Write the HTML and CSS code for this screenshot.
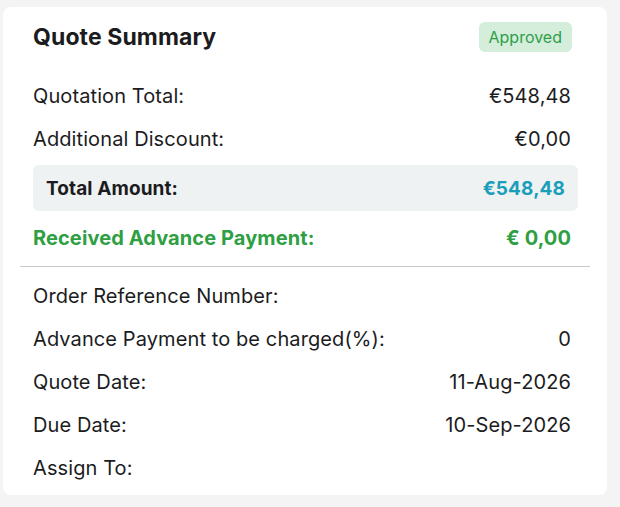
FILE: index.html
```html
<!DOCTYPE html>
<html lang="en">
<head>
    <meta charset="UTF-8">
    <meta name="viewport" content="width=device-width, initial-scale=1.0">
    <title>Quote Summary</title>
    <link rel="stylesheet" href="styles.css">
</head>
<body>
    <div class="card">
        <div class="card-header">
            <h2>Quote Summary</h2>
            <span class="badge">Approved</span>
        </div>

        <div class="row">
            <span>Quotation Total:</span>
            <span>€548,48</span>
        </div>
        <div class="row">
            <span>Additional Discount:</span>
            <span>€0,00</span>
        </div>
        <div class="row total">
            <span>Total Amount:</span>
            <span class="total-value">€548,48</span>
        </div>
        <div class="row received">
            <span>Received Advance Payment:</span>
            <span>€ 0,00</span>
        </div>

        <hr class="divider">

        <div class="row">
            <span>Order Reference Number:</span>
            <span></span>
        </div>
        <div class="row">
            <span>Advance Payment to be charged(%):</span>
            <span>0</span>
        </div>
        <div class="row">
            <span>Quote Date:</span>
            <span>11-Aug-2026</span>
        </div>
        <div class="row">
            <span>Due Date:</span>
            <span>10-Sep-2026</span>
        </div>
        <div class="row">
            <span>Assign To:</span>
            <span></span>
        </div>
    </div>
</body>
</html>
```

FILE: styles.css
```css
* {
    margin: 0;
    padding: 0;
    box-sizing: border-box;
}

body {
    background: #f4f4f5;
    font-family: Inter, "Liberation Sans", sans-serif;
    color: #1c1c1e;
    padding: 7px 13px 0 3px;
}

.card {
    background: #fff;
    border-radius: 8px;
    padding: 14px 29px 10px 30px;
    width: 604px;
    height: 488px;
}

.card-header {
    display: flex;
    justify-content: space-between;
    align-items: center;
    padding-right: 6px;
    height: 32px;
    margin-bottom: 21px;
}

.card-header h2 {
    font-size: 23px;
    font-weight: 700;
    letter-spacing: 0.1px;
}

.badge {
    background: #d4eedb;
    color: #2f9e4a;
    font-size: 16px;
    padding: 5px 10px;
    border-radius: 6px;
    height: 30px;
    line-height: 20px;
}

.row {
    display: flex;
    justify-content: space-between;
    align-items: center;
    height: 43px;
    font-size: 20px;
    letter-spacing: 0.1px;
    padding-right: 7px;
}

.row.total {
    background: #eef2f3;
    border-radius: 6px;
    height: 46px;
    padding: 0 13px;
    margin: 5px 0 7px;
    font-weight: 700;
    font-size: 19px;
}

.total-value {
    color: #1a9fbb;
}

.row.received {
    color: #2ea043;
    font-weight: 700;
    height: 40px;
}

.divider {
    border: none;
    border-top: 1px solid #c8c8c8;
    margin: 8px -12px 7px -13px;
}
```
